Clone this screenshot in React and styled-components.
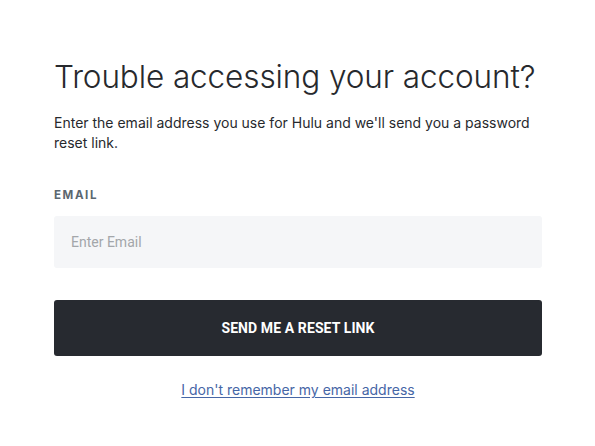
import React from "react";
import styled, { createGlobalStyle } from "styled-components";

const Global = createGlobalStyle`
  html, body { margin: 0; padding: 0; background: #fff; }
  body { font-family: "Inter", "Liberation Sans", sans-serif; }
`;

const Page = styled.div`
  width: 595px;
  height: 446px;
  box-sizing: border-box;
  padding: 57px 53px 0 54px;
`;

const Form = styled.form`
  display: flex;
  flex-direction: column;
  width: 488px;
`;

const Title = styled.h1`
  margin: 0;
  font-family: "Inter", sans-serif;
  font-weight: 300;
  font-size: 31.5px;
  line-height: 40px;
  color: #27292d;
  letter-spacing: -0.1px;
`;

const Lead = styled.p`
  margin: 16px 0 0;
  font-family: "Inter", sans-serif;
  font-size: 14px;
  line-height: 20px;
  color: #27292d;
`;

const Label = styled.label`
  margin-top: 35px;
  font-family: "Inter", sans-serif;
  font-weight: 700;
  font-size: 11.5px;
  letter-spacing: 1.6px;
  color: #5b6770;
`;

const Input = styled.input`
  margin-top: 14px;
  height: 52px;
  box-sizing: border-box;
  border: none;
  border-radius: 3px;
  background: #f5f6f8;
  padding: 0 17px;
  font-family: "Roboto", sans-serif;
  font-size: 14px;
  outline: none;
  &::placeholder { color: #a3a6aa; }
`;

const Button = styled.button`
  margin-top: 32px;
  height: 56px;
  border: none;
  border-radius: 3px;
  background: #272a30;
  color: #fff;
  font-family: "Roboto", sans-serif;
  font-weight: 700;
  font-size: 14px;
  letter-spacing: 0.1px;
`;

const Help = styled.a`
  margin-top: 25px;
  align-self: center;
  font-family: "Inter", sans-serif;
  font-size: 14px;
  color: #4666a6;
  text-decoration: underline;
  text-underline-offset: 2px;
`;

export default function App() {
  return (
    <Page>
      <Global />
      <Form onSubmit={(e) => e.preventDefault()}>
        <Title>Trouble accessing your account?</Title>
        <Lead>
          Enter the email address you use for Hulu and we'll send you a password reset link.
        </Lead>
        <Label htmlFor="email">EMAIL</Label>
        <Input id="email" placeholder="Enter Email" />
        <Button type="submit">SEND ME A RESET LINK</Button>
        <Help href="#">I don't remember my email address</Help>
      </Form>
    </Page>
  );
}
